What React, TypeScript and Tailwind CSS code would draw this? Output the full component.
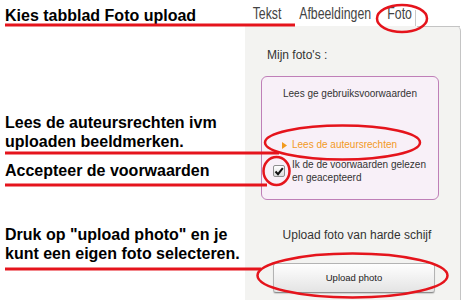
const RED = "#e5141c";

function Annotations() {
  return (
    <svg
      className="pointer-events-none absolute inset-0"
      width={465}
      height={300}
      viewBox="0 0 465 300"
      fill="none"
      stroke={RED}
      strokeWidth={3}
    >
      <line x1={5} y1={25} x2={295} y2={25} />
      <line x1={5} y1={153} x2={279} y2={153} />
      <line x1={5} y1={185} x2={267} y2={185} />
      <line x1={5} y1={269} x2={261} y2={269} />
      <ellipse cx={402} cy={18.5} rx={25} ry={13.5} strokeWidth={2.5} />
      <ellipse cx={342.5} cy={142.5} rx={77.5} ry={17} strokeWidth={2.5} />
      <ellipse cx={276.5} cy={171} rx={13} ry={14} strokeWidth={2.5} />
      <ellipse cx={352.5} cy={275.5} rx={95} ry={22} strokeWidth={2.5} />
    </svg>
  );
}

// tab labels in the screenshot use a condensed face; squeeze Liberation Sans to match
function Tabs() {
  return (
    <div className="flex h-[26px] origin-left scale-x-[0.77] items-end pl-[10px] text-[16px] leading-[18px] text-[#444]">
      <span className="pb-[3.5px]">Tekst</span>
      <span className="ml-[23px] pb-[3.5px]">Afbeeldingen</span>
      <div className="ml-[21px] flex h-[16px] items-end border-r border-[#b9b9b9] pr-[4px]">
        <span className="pb-[3.5px]">Foto</span>
      </div>
    </div>
  );
}

function Panel() {
  return (
    <div className="flex flex-1 flex-col rounded-tr-[5px] border-r border-[#c4c4c4] bg-[#f3f3f1] text-[#333]">
      <div className="flex h-px">
        <div className="w-[172px]" />
        <div className="flex-1 bg-[#c4c4c4]" />
      </div>

      <p className="mt-[21px] pl-[22px] text-[12px] leading-[14px]">Mijn foto's :</p>

      <div className="ml-[16px] mt-[14px] flex h-[124px] w-[178px] flex-col rounded-[6px] border border-[#bf7fb8] bg-[#f8f0f8] text-[10px] leading-[12px]">
        <p className="pt-[11px] text-center">Lees ge gebruiksvoorwaarden</p>

        <div className="mt-[39px] flex items-center pl-[20px] text-[#f29a1f]">
          <svg width={5} height={7} viewBox="0 0 5 7">
            <path d="M0 0 L5 3.5 L0 7 Z" fill="#f29a1f" />
          </svg>
          <span className="ml-[5px]">Lees de auteursrechten</span>
        </div>

        <div className="mt-[6.5px] flex items-center pl-[11px]">
          <span className="flex h-[12px] w-[12px] shrink-0 items-center justify-center rounded-[2px] border border-[#8f8f8f] bg-gradient-to-b from-white to-[#dcdcdc]">
            <svg width={10} height={9} viewBox="0 0 10 9" fill="none">
              <path d="M1.5 4.5 L4 7.2 L8.8 1.2" stroke="#111" strokeWidth={2} />
            </svg>
          </span>
          <p className="ml-[7px] leading-[13.5px]">
            Ik de de voorwaarden gelezen
            <br />
            en geacepteerd
          </p>
        </div>
      </div>

      <p className="mt-[28px] pl-[9px] text-center text-[12px] leading-[14px]">Upload foto van harde schijf</p>

      <button className="ml-[28px] mt-[21px] flex h-[30px] w-[162px] items-center justify-center rounded-[3px] border border-[#b3b3b3] border-b-[#8e8e8e] bg-gradient-to-b from-[#fefefe] to-[#e4e4e4] text-[9.5px] text-[#222] shadow-[0_1px_1px_rgba(0,0,0,0.15)]">
        Upload photo
      </button>
    </div>
  );
}

export default function App() {
  return (
    <div className="relative flex h-[300px] w-[465px] overflow-hidden bg-white font-['Liberation_Sans',Arial,sans-serif]">
      <div className="flex w-[245px] shrink-0 flex-col pl-[5px] pt-[6px] text-[16px] font-bold leading-[19px] text-black">
        <p>Kies tabblad Foto upload</p>
        <p className="mt-[88px]">
          Lees de auteursrechten ivm
          <br />
          uploaden beeldmerken.
        </p>
        <p className="mt-[10px]">Accepteer de voorwaarden</p>
        <p className="mt-[45px]">
          Druk op "upload photo" en je
          <br />
          kunt een eigen foto selecteren.
        </p>
      </div>

      <div className="flex w-[216px] shrink-0 flex-col">
        <Tabs />
        <Panel />
      </div>

      <Annotations />
    </div>
  );
}
